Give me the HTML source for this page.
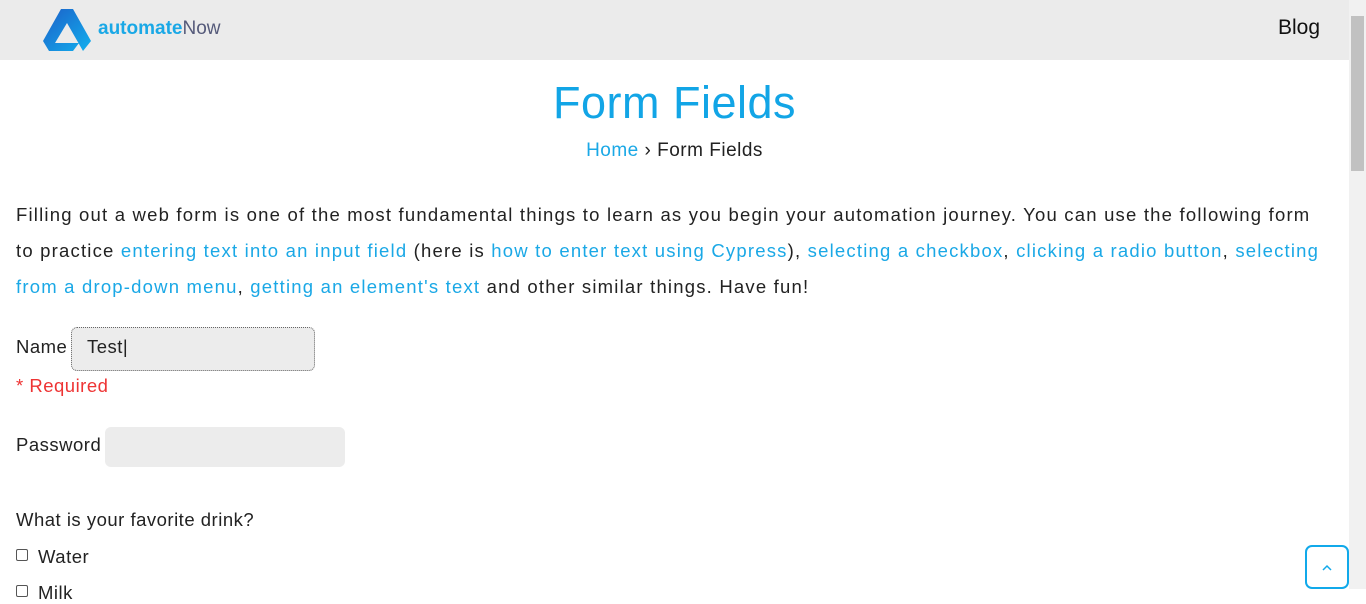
<!DOCTYPE html>
<html><head><style>
body{margin:0;width:1366px;height:589px;overflow:hidden;background:#fff;font-family:"Liberation Sans",sans-serif;color:#222;position:relative}
.hdr{position:absolute;left:0;top:0;width:1349px;height:60px;background:#ebebeb}
.logo{position:absolute;left:43px;top:9px}
.brand{position:absolute;left:98px;top:18px;font-size:19px;color:#555a7a}
.brand b{color:#1aa8e6}
.blog{position:absolute;left:1278px;top:16px;font-size:21px;color:#111}
.sb{position:absolute;left:1349px;top:0;width:17px;height:589px;background:#f1f1f1}
.thumb{position:absolute;left:1351px;top:16px;width:13px;height:155px;background:#c1c1c1}
h1{position:absolute;left:0;width:1349px;top:77px;margin:0;text-align:center;font-weight:normal;font-size:45px;color:#12a5e6;letter-spacing:.5px}
.bc{position:absolute;left:0;width:1349px;top:140px;text-align:center;font-size:19px;letter-spacing:.5px}
a{color:#1aa8e6;text-decoration:none}
.p{position:absolute;left:16px;top:197px;font-size:18.5px;line-height:36px;letter-spacing:1.2px;white-space:nowrap}
.lbl{position:absolute;font-size:18.5px;letter-spacing:.5px}
.in{position:absolute;background:#ececec;border-radius:6px}
.cb{position:absolute;left:16px;width:10px;height:10px;border:1px solid #555;border-radius:2px;background:#fff}
.top{position:absolute;left:1305px;top:545px;width:40px;height:40px;border:2px solid #11a9ea;border-radius:7px;background:#fff}
</style></head><body>
<div class="hdr">
<svg class="logo" width="48" height="42" viewBox="0 0 48 42"><defs><linearGradient id="g" x1="0" y1="0" x2="1" y2="1"><stop offset="0" stop-color="#1c5fc8"/><stop offset="1" stop-color="#12b0ee"/></linearGradient></defs><polygon points="18,0 30,0 48,32 40,42 24,14 12,34 36,34 30,42 6,42 0,32" fill="url(#g)"/></svg>
<div class="brand"><b>automate</b>Now</div>
<div class="blog">Blog</div>
</div>
<div class="sb"></div><div class="thumb"></div>
<h1>Form Fields</h1>
<div class="bc"><a>Home</a> › Form Fields</div>
<div class="p">Filling out a web form is one of the most fundamental things to learn as you begin your automation journey. You can use the following form<br>to practice <a>entering text into an input field</a> (here is <a>how to enter text using Cypress</a>), <a>selecting a checkbox</a>, <a>clicking a radio button</a>, <a>selecting</a><br><a>from a drop-down menu</a>, <a>getting an element's text</a> and other similar things. Have fun!</div>
<div class="lbl" style="left:16px;top:336px">Name</div>
<div class="in" style="left:71px;top:327px;width:244px;height:44px;border:1px dotted #666;box-sizing:border-box"></div>
<div class="lbl" style="left:87px;top:336px">Test|</div>
<div class="lbl" style="left:16px;top:375px;color:#e33">* Required</div>
<div class="lbl" style="left:16px;top:434px">Password</div>
<div class="in" style="left:105px;top:427px;width:240px;height:40px"></div>
<div class="lbl" style="left:16px;top:509px">What is your favorite drink?</div>
<div class="cb" style="top:549px"></div><div class="lbl" style="left:38px;top:546px">Water</div>
<div class="cb" style="top:585px"></div><div class="lbl" style="left:38px;top:582px">Milk</div>
<div class="top"><svg width="40" height="40"><polyline points="16,23 20,19 24,23" fill="none" stroke="#11a9ea" stroke-width="1.5"/></svg></div>
</body></html>
